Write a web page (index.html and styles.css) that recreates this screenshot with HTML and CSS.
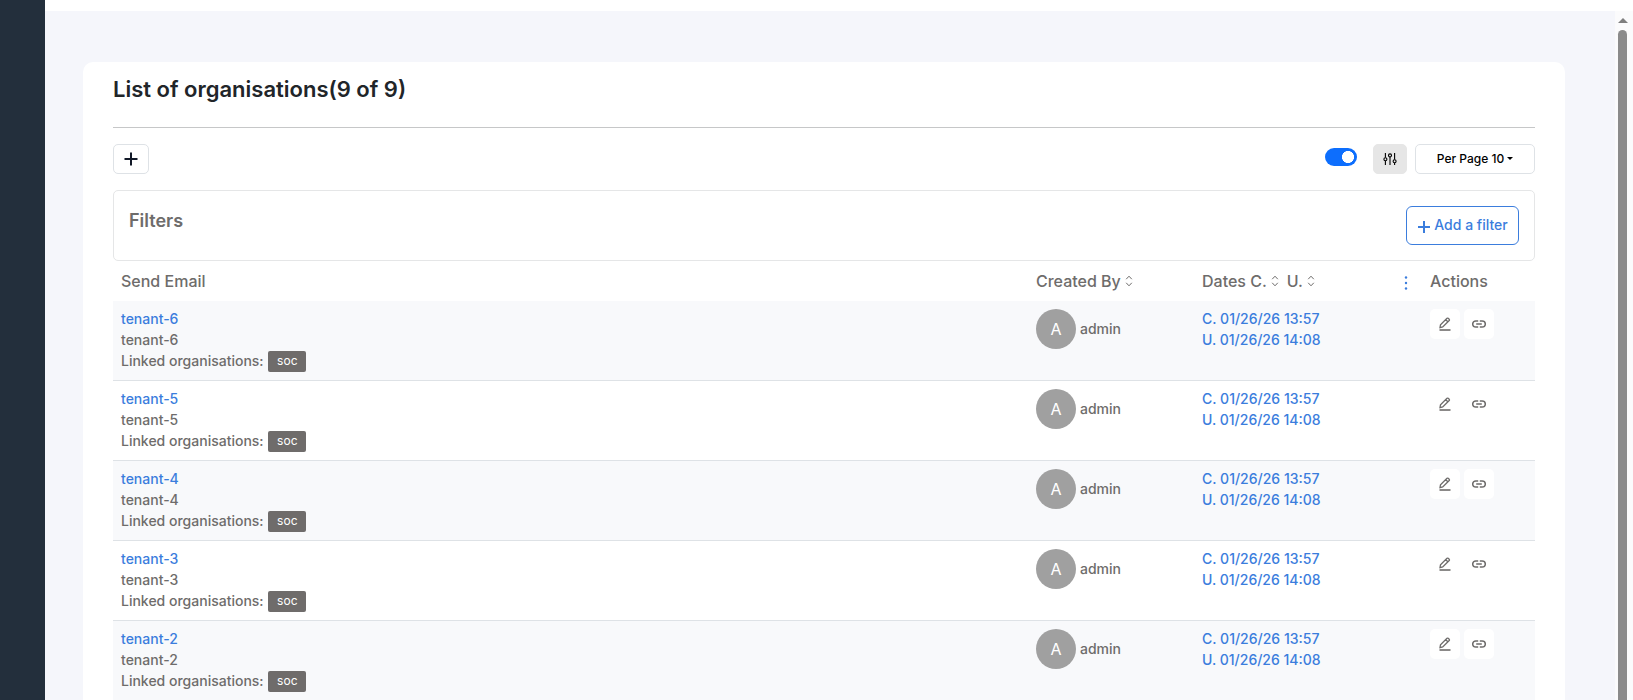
FILE: index.html
```html
<!DOCTYPE html>
<html lang="en">
<head>
<meta charset="utf-8">
<title>Organisations</title>
<link rel="stylesheet" href="styles.css">
</head>
<body>
<svg class="defs" width="0" height="0" aria-hidden="true">
  <symbol id="sort" viewBox="0 0 8 12"><path d="M1.2 4.2 L4 1.2 L6.8 4.2 M1.2 7.8 L4 10.8 L6.8 7.8" fill="none" stroke="currentColor"/></symbol>
  <symbol id="edit" viewBox="0 0 14 14"><path d="M2 10.6 L2.5 7.8 L9 1.3 Q9.6 .8 10.2 1.3 L11.2 2.3 Q11.7 2.9 11.2 3.5 L4.7 10 Z M7.8 2.7 L9.8 4.7" fill="none" stroke="currentColor" stroke-width="1.3"/><path d="M1.5 13H12.5" stroke="currentColor" stroke-width="1.6"/></symbol>
  <symbol id="link" viewBox="0 0 14 8"><path d="M6.2 .9H3.8A3.1 3.1 0 0 0 3.8 7.1H6.2 M7.8 .9H10.2A3.1 3.1 0 0 1 10.2 7.1H7.8 M4.2 4H9.8" fill="none" stroke="currentColor" stroke-width="1.5"/></symbol>
</svg>
<div class="app">
  <aside class="sidebar"></aside>
  <div class="main">
    <header class="topbar"></header>
    <div class="scroller">
      <main class="content">
        <section class="card">
          <h1 class="title">List of organisations(9 of 9)</h1>
          <div class="toolbar">
            <button class="btn add"><svg width="14" height="14" viewBox="0 0 14 14"><path d="M7 .5V13.5M.5 7H13.5" stroke="currentColor" stroke-width="2"/></svg></button>
            <span class="switch"></span>
            <button class="btn tune"><svg width="14" height="14" viewBox="0 0 14 14" fill="none" stroke="currentColor" stroke-width="1.1"><path d="M2.4 1V5.5M2.4 9V13M7 5V13M11.6 1V7.5M11.6 11V13"/><circle cx="2.4" cy="7.3" r="1.5"/><circle cx="7" cy="3.4" r="1.5"/><circle cx="11.6" cy="9.3" r="1.5"/></svg></button>
            <button class="btn perpage">Per Page 10<i class="caret"></i></button>
          </div>
          <div class="filters">
            <h2 class="filters-title">Filters</h2>
            <button class="add-filter"><svg width="12" height="12" viewBox="0 0 12 12"><path d="M6 0V12M0 6H12" stroke="currentColor" stroke-width="2"/></svg>Add a filter</button>
          </div>
          <div class="row head">
            <div>Send Email</div>
            <div>Created By<svg class="sort"><use href="#sort"/></svg></div>
            <div>Dates C.<svg class="sort"><use href="#sort"/></svg><span class="updated">U.</span><svg class="sort"><use href="#sort"/></svg></div>
            <div class="menu"><svg width="4" height="14" viewBox="0 0 4 14" fill="currentColor"><circle cx="2" cy="1.5" r="1.2"/><circle cx="2" cy="7" r="1.2"/><circle cx="2" cy="12.5" r="1.2"/></svg></div>
            <div>Actions</div>
          </div>
          <div class="row">
            <div class="text"><a>tenant-6</a><p>tenant-6</p><p>Linked organisations: <b class="badge">soc</b></p></div>
            <div class="user"><span class="avatar">A</span>admin</div>
            <div class="text"><a>C. 01/26/26 13:57</a><a>U. 01/26/26 14:08</a></div>
            <div></div>
            <div class="actions"><button class="act"><svg class="edit"><use href="#edit"/></svg></button><button class="act"><svg class="link"><use href="#link"/></svg></button></div>
          </div>
          <div class="row">
            <div class="text"><a>tenant-5</a><p>tenant-5</p><p>Linked organisations: <b class="badge">soc</b></p></div>
            <div class="user"><span class="avatar">A</span>admin</div>
            <div class="text"><a>C. 01/26/26 13:57</a><a>U. 01/26/26 14:08</a></div>
            <div></div>
            <div class="actions"><button class="act"><svg class="edit"><use href="#edit"/></svg></button><button class="act"><svg class="link"><use href="#link"/></svg></button></div>
          </div>
          <div class="row">
            <div class="text"><a>tenant-4</a><p>tenant-4</p><p>Linked organisations: <b class="badge">soc</b></p></div>
            <div class="user"><span class="avatar">A</span>admin</div>
            <div class="text"><a>C. 01/26/26 13:57</a><a>U. 01/26/26 14:08</a></div>
            <div></div>
            <div class="actions"><button class="act"><svg class="edit"><use href="#edit"/></svg></button><button class="act"><svg class="link"><use href="#link"/></svg></button></div>
          </div>
          <div class="row">
            <div class="text"><a>tenant-3</a><p>tenant-3</p><p>Linked organisations: <b class="badge">soc</b></p></div>
            <div class="user"><span class="avatar">A</span>admin</div>
            <div class="text"><a>C. 01/26/26 13:57</a><a>U. 01/26/26 14:08</a></div>
            <div></div>
            <div class="actions"><button class="act"><svg class="edit"><use href="#edit"/></svg></button><button class="act"><svg class="link"><use href="#link"/></svg></button></div>
          </div>
          <div class="row">
            <div class="text"><a>tenant-2</a><p>tenant-2</p><p>Linked organisations: <b class="badge">soc</b></p></div>
            <div class="user"><span class="avatar">A</span>admin</div>
            <div class="text"><a>C. 01/26/26 13:57</a><a>U. 01/26/26 14:08</a></div>
            <div></div>
            <div class="actions"><button class="act"><svg class="edit"><use href="#edit"/></svg></button><button class="act"><svg class="link"><use href="#link"/></svg></button></div>
          </div>
        </section>
      </main>
      <div class="scrollbar"><i class="arrow"></i><i class="thumb"></i></div>
    </div>
  </div>
</div>
</body>
</html>
```
FILE: styles.css
```css
* { box-sizing: border-box; }
body { margin: 0; font: 500 14px/21px Inter, sans-serif; color: #6e6c6b; }
h1, h2, p { margin: 0; }
button { font: inherit; padding: 0; border: 0; display: flex; align-items: center; justify-content: center; }
svg { display: block; }
.defs { display: none; }
.app { display: flex; height: 700px; overflow: hidden; }
.sidebar { width: 45px; background: #232f3c; flex: none; }
.main { flex: 1; display: flex; flex-direction: column; min-width: 0; }
.topbar { height: 11px; background: #fff; flex: none; }
.scroller { flex: 1; display: flex; min-height: 0; background: #f5f6fb; }
.content { flex: 1; padding: 51px 50px 0 38px; overflow: hidden; }
.card { background: #fff; border-radius: 10px; padding: 0 30px; height: 900px; }
.title { height: 66px; padding-top: 13px; font-size: 22px; line-height: 28px; font-weight: 600; color: #212529; border-bottom: 1px solid #c6c7c8; }
.toolbar { display: flex; align-items: center; height: 62px; }
.btn { height: 30px; border: 1px solid #dee2e6; border-radius: 5px; background: #fff; color: #000; }
.add { width: 36px; margin-right: auto; color: #111827; }
.switch { width: 32px; height: 18px; margin: -4px 16px 0 0; border-radius: 9px; background: radial-gradient(circle at 23px 9px, #fff 5.7px, #0d6efd 6.3px); }
.tune { width: 34px; margin-right: 8px; background: #e6e6e6; border-color: #e6e6e6; }
.perpage { width: 120px; padding-bottom: 2px; font-size: 12px; }
.caret { margin: 1px 0 0 3px; border: 3px solid transparent; border-top-color: currentColor; border-bottom: 0; }
.filters { display: flex; justify-content: space-between; height: 71px; padding: 15px; border: 1px solid #e5e6e7; border-radius: 5px; }
.filters-title { font-size: 18px; line-height: 30px; font-weight: 600; }
.add-filter { width: 113px; height: 39px; padding: 0 0 2px 1px; gap: 4px; border: 1px solid #3b7ddd; border-radius: 6px; background: #fff; color: #3b7ddd; }
.add-filter svg { margin-top: 4px; }
.row { display: grid; grid-template-columns: 915px 166px 194px 34px 1fr; height: 80px; padding: 8px 8px 0; border-bottom: 1px solid #dee2e6; }
.row:nth-of-type(even) { background: #f8f9fb; }
.row.head { height: 40px; padding-bottom: 8px; border: 0; font-size: 16px; line-height: 24px; }
.row:nth-of-type(odd) { background: #fff; }
.head > div { display: flex; align-items: center; }
.sort { width: 8px; height: 12px; margin-left: 4px; }
.updated { margin-left: 8px; }
.head .menu { color: #3b7ddd; padding: 3px 0 0 8px; }
a { display: block; color: #3b7ddd; }
.text { margin-top: -1px; }
.badge { display: inline-block; width: 38px; height: 21px; margin: 1px 0 0 1px; border-radius: 2px; background: #6f6c6b; color: #fff; font-size: 12px; font-weight: 400; line-height: 19px; letter-spacing: .15px; text-align: center; vertical-align: top; }
.user { display: flex; gap: 4px; line-height: 40px; }
.avatar { width: 40px; height: 40px; border-radius: 50%; background: #a0a0a0; color: #fff; font-size: 16px; font-weight: 400; text-align: center; }
.actions { display: flex; gap: 4px; }
.act { width: 30px; height: 30px; border-radius: 5px; background: #fff; color: #6e6c6b; }
.edit { width: 14px; height: 14px; }
.link { width: 14px; height: 8px; }
.scrollbar { width: 18px; padding: 7px 3px 0; background: #fbfbfc; display: flex; flex-direction: column; align-items: flex-start; }
.arrow { margin: 0 0 7px; border: 5px solid transparent; border-bottom-color: #7f7f7f; border-top: 0; }
.thumb { width: 9px; flex: 1; background: #8b8b8b; border-radius: 5px 5px 0 0; }
```
